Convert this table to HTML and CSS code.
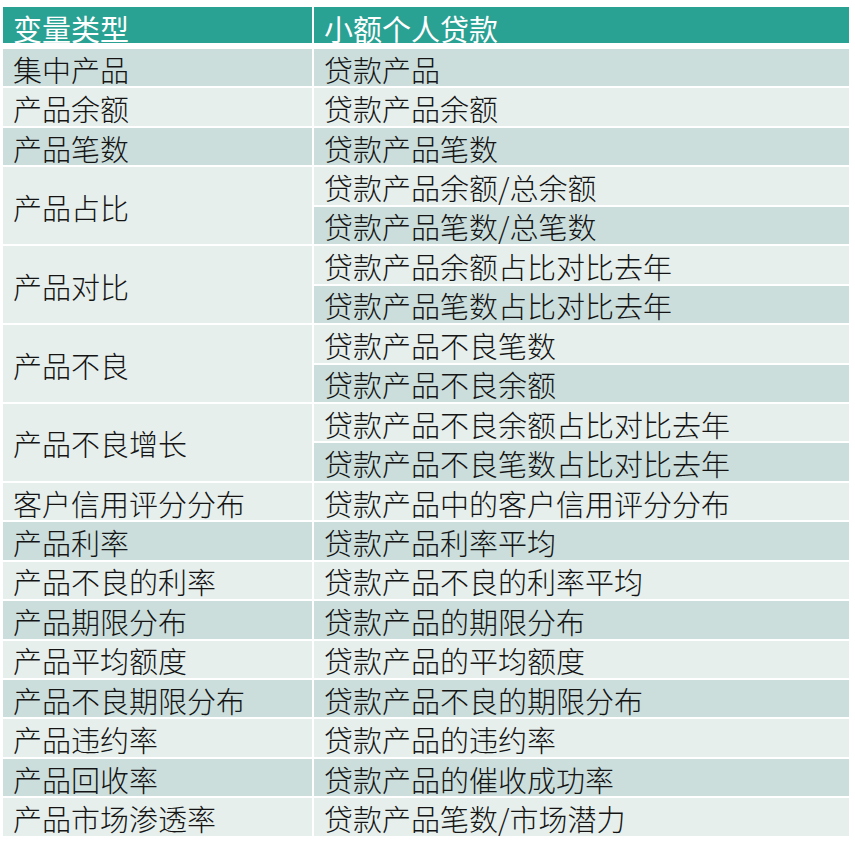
FILE: index.html
```html
<!DOCTYPE html>
<html lang="zh-CN">
<head>
<meta charset="utf-8">
<title>变量类型</title>
<link rel="stylesheet" href="styles.css">
</head>
<body>
<div class="table">
  <div class="th">变量类型</div>
  <div class="th">小额个人贷款</div>
  <div class="spacer"></div>

  <div class="td dark">集中产品</div><div class="td dark">贷款产品</div>
  <div class="td light">产品余额</div><div class="td light">贷款产品余额</div>
  <div class="td dark">产品笔数</div><div class="td dark">贷款产品笔数</div>

  <div class="td light span2">产品占比</div><div class="td light">贷款产品余额/总余额</div>
  <div class="td dark">贷款产品笔数/总笔数</div>

  <div class="td light span2">产品对比</div><div class="td light">贷款产品余额占比对比去年</div>
  <div class="td dark">贷款产品笔数占比对比去年</div>

  <div class="td light span2">产品不良</div><div class="td light">贷款产品不良笔数</div>
  <div class="td dark">贷款产品不良余额</div>

  <div class="td light span2">产品不良增长</div><div class="td light">贷款产品不良余额占比对比去年</div>
  <div class="td dark">贷款产品不良笔数占比对比去年</div>

  <div class="td light">客户信用评分分布</div><div class="td light">贷款产品中的客户信用评分分布</div>
  <div class="td dark">产品利率</div><div class="td dark">贷款产品利率平均</div>
  <div class="td light">产品不良的利率</div><div class="td light">贷款产品不良的利率平均</div>
  <div class="td dark">产品期限分布</div><div class="td dark">贷款产品的期限分布</div>
  <div class="td light">产品平均额度</div><div class="td light">贷款产品的平均额度</div>
  <div class="td dark">产品不良期限分布</div><div class="td dark">贷款产品不良的期限分布</div>
  <div class="td light">产品违约率</div><div class="td light">贷款产品的违约率</div>
  <div class="td dark">产品回收率</div><div class="td dark">贷款产品的催收成功率</div>
  <div class="td light">产品市场渗透率</div><div class="td light">贷款产品笔数/市场潜力</div>
</div>
</body>
</html>
```

FILE: styles.css
```css
html, body {
  margin: 0;
  padding: 0;
  background: #ffffff;
}

body {
  font-family: "Noto Sans CJK SC", "Noto Sans", sans-serif;
}

.table {
  display: grid;
  grid-template-columns: 309px 535px;
  grid-template-rows: 36px 2px repeat(20, 37.45px);
  column-gap: 2px;
  row-gap: 2px;
  margin: 7px 0 0 3px;
}

.spacer {
  grid-column: 1 / span 2;
}

.th {
  display: flex;
  align-items: center;
  background: #29a193;
  color: #ffffff;
  font-size: 29px;
  font-weight: 400;
  line-height: 30px;
  padding: 5px 0 0 10px;
  box-sizing: border-box;
  white-space: nowrap;
}

.td {
  display: flex;
  align-items: center;
  padding: 2px 0 0 10px;
  box-sizing: border-box;
  font-size: 29px;
  font-weight: 300;
  line-height: 34px;
  color: #141414;
  white-space: nowrap;
}

.span2 {
  grid-row: span 2;
}

.dark {
  background: #cbdedc;
}

.light {
  background: #e6efec;
}
```
